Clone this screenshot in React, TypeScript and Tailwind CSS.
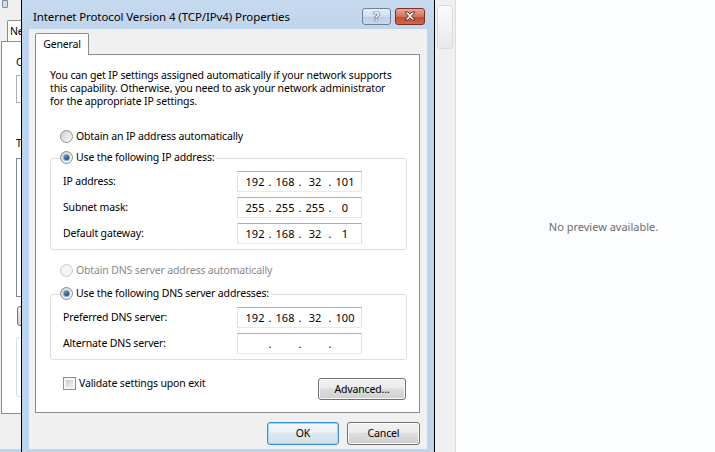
import { Fragment, type ReactNode } from 'react'
import clsx from 'clsx'

const Radio = ({ checked, disabled }: { checked?: boolean; disabled?: boolean }) => (
  <span
    className={clsx(
      'flex h-[13px] w-[13px] shrink-0 items-center justify-center rounded-full border',
      disabled
        ? 'border-[#c9c9c9] bg-[#f4f4f4]'
        : 'border-[#8e8f8f] bg-[linear-gradient(135deg,#cfcfcf,#fbfbfb)]',
    )}
  >
    {checked && (
      <span className="flex h-[7px] w-[7px] items-center justify-center rounded-full bg-[#7fb4de]">
        <span className="h-[5px] w-[5px] rounded-full bg-[radial-gradient(circle_at_35%_35%,#5b8fc0,#0f2c52)]" />
      </span>
    )}
  </span>
)

const Checkbox = () => (
  <span className="block h-[13px] w-[13px] shrink-0 border border-[#8e8f8f] bg-[#f4f4f4] p-[2px]">
    <span className="block h-full w-full bg-[linear-gradient(135deg,#c9c9c9,#f3f3f3)]" />
  </span>
)

const Button = ({ children, primary, className }: { children: ReactNode; primary?: boolean; className?: string }) => (
  <div
    className={clsx(
      'flex items-center justify-center rounded-[3px] border',
      primary
        ? 'border-[#3c8fcc] bg-[linear-gradient(#f4f8fb,#e9f0f6_45%,#dce7f0_50%,#d2e0eb)] shadow-[inset_0_0_0_1px_#9fd8f7]'
        : 'border-[#707070] bg-[linear-gradient(#f2f2f2,#ebebeb_45%,#dddddd_50%,#cfcfcf)] shadow-[inset_0_0_0_1px_#fafafa]',
      className,
    )}
  >
    {children}
  </div>
)

const IpField = ({ parts = ['', '', '', ''] }: { parts?: string[] }) => (
  <div className="flex h-[21px] w-[125px] items-center border border-[#abadb3] border-b-[#e3e9ef] border-l-[#e2e3ea] border-r-[#dbdfe6] bg-white pl-[5px] text-[11px] tracking-normal">
    {parts.map((p, i) => (
      <Fragment key={i}>
        {i > 0 && <span className="w-[6px] text-center">.</span>}
        <span className="w-[24px] text-center">{p}</span>
      </Fragment>
    ))}
  </div>
)

const Row = ({ label, parts }: { label: string; parts?: string[] }) => (
  <div className="flex items-center">
    <span className="w-[174px]">{label}</span>
    <IpField parts={parts} />
  </div>
)

const Group = ({ label, children }: { label: string; children: ReactNode }) => (
  <div className="relative rounded-[3px] border border-[#d5dfe5] pb-[5px] pl-[12px] pt-[12px]">
    <div className="absolute -top-[8px] left-[9px] flex h-[13px] items-center gap-[3px] bg-white pr-[2px]">
      <Radio checked />
      <span>{label}</span>
    </div>
    <div className="flex flex-col gap-[5px]">{children}</div>
  </div>
)

export default function App() {
  return (
    <div className="relative flex h-[452px] w-[715px] overflow-hidden bg-[#f0f0f0] font-['Noto_Sans',sans-serif] text-[10.5px] leading-[13px] tracking-[-0.15px] text-black">
      <div className="relative h-full w-[455px] shrink-0">
        {/* window behind, mostly covered */}
        <div className="absolute left-0 top-0 flex h-full w-[80px] flex-col bg-[#f0f0f0]">
          <div className="flex h-[20px] items-start pl-[2px]">
            <span className="block h-[8px] w-[6px] rounded-b-[1px] border border-[#7d8da0] bg-[#cfdcec]" />
          </div>
          <div className="ml-[7px] flex h-[21px] w-[40px] items-center rounded-t-[2px] border border-b-0 border-[#898c95] bg-white pl-[2px]">
            Ne
          </div>
          <div className="ml-[1px] flex h-[373px] flex-col border border-[#898c95] bg-white pl-[14px] pt-[14px]">
            <span>C</span>
            <div className="mt-[6px] h-[28px] border border-[#abadb3]" />
            <span className="mt-[34px]">T</span>
            <div className="mt-[8px] h-[139px] border border-[#828790]" />
            <div className="ml-[1px] mt-[9px] h-[20px] rounded-[3px] border border-[#707070] bg-[linear-gradient(#f2f2f2,#cfcfcf)]" />
            <div className="mt-[11px] h-[60px] rounded-[3px] border border-[#d5dfe5]" />
          </div>
          <div className="mt-auto h-[3px] bg-[#bcd4ec]" />
        </div>

        {/* another window edge on the right */}
        <div className="absolute left-[437px] top-[5px] h-[44px] w-[16px] rounded-[3px] border border-[#d9d9d9] bg-[linear-gradient(#fbfbfb,#e9e9e9)]" />

        {/* dialog */}
        <div className="absolute left-[21px] top-0 flex h-[470px] w-[414px] flex-col border-x border-black bg-[linear-gradient(#c6daef,#bcd4ec_40px)]">
          <div className="flex h-[29px] items-center pl-[11px] pr-[9px] pt-[3px]">
            <span className="flex-1 text-[11.5px] tracking-[-0.1px]">Internet Protocol Version 4 (TCP/IPv4) Properties</span>
            <div className="flex gap-[4px]">
              <div className="flex h-[17px] w-[29px] items-center justify-center rounded-[3px] border border-[#6f7f95] bg-[linear-gradient(#e4eef9,#cfdff0_50%,#b8cde6_51%,#c7d9ee)] text-[13px] font-bold leading-none text-white [text-shadow:0_0_1px_#223450,0_0_1px_#223450,0_0_1px_#223450]">
                ?
              </div>
              <div className="flex h-[17px] w-[30px] items-center justify-center rounded-[3px] border border-[#7a2f24] bg-[linear-gradient(#e8a899,#d8705c_50%,#c44a33_51%,#d0664e)]">
                <svg width="12" height="10" viewBox="0 0 12 10">
                  <path
                    d="M1 1h3l2 2.2L8 1h3L7.6 5 11 9H8L6 6.8 4 9H1l3.4-4z"
                    fill="#fff"
                    stroke="#3b1a14"
                    strokeWidth="0.8"
                    strokeLinejoin="round"
                  />
                </svg>
              </div>
            </div>
          </div>

          <div className="mx-[7px] flex h-[420px] flex-col bg-[#f0f0f0] pl-[6px] pr-[7px] pt-[4px]">
            <div className="relative z-10 -mb-px flex h-[22px] w-[54px] items-center justify-center rounded-t-[2px] border border-b-0 border-[#898c95] bg-white">
              General
            </div>
            <div className="flex h-[359px] flex-col border border-[#898c95] bg-white pl-[14px] pr-[12px] pt-[14px]">
              <div className="flex flex-col">
                <span>You can get IP settings assigned automatically if your network supports</span>
                <span>this capability. Otherwise, you need to ask your network administrator</span>
                <span>for the appropriate IP settings.</span>
              </div>

              <div className="ml-[10px] mt-[22px] flex h-[13px] items-center gap-[3px]">
                <Radio />
                <span>Obtain an IP address automatically</span>
              </div>

              <div className="mt-[15px]">
                <Group label="Use the following IP address:">
                  <Row label="IP address:" parts={['192', '168', '32', '101']} />
                  <Row label="Subnet mask:" parts={['255', '255', '255', '0']} />
                  <Row label="Default gateway:" parts={['192', '168', '32', '1']} />
                </Group>
              </div>

              <div className="ml-[10px] mt-[14px] flex h-[13px] items-center gap-[3px] text-[#8a8a8a]">
                <Radio disabled />
                <span>Obtain DNS server address automatically</span>
              </div>

              <div className="mt-[17px]">
                <Group label="Use the following DNS server addresses:">
                  <Row label="Preferred DNS server:" parts={['192', '168', '32', '100']} />
                  <Row label="Alternate DNS server:" />
                </Group>
              </div>

              <div className="mt-[17px] flex items-start justify-between">
                <div className="ml-[13px] flex h-[13px] items-center gap-[3px]">
                  <Checkbox />
                  <span>Validate settings upon exit</span>
                </div>
                <Button className="mr-px mt-px h-[22px] w-[88px]">Advanced...</Button>
              </div>
            </div>

            <div className="mt-[9px] flex justify-end gap-[8px]">
              <Button primary className="h-[23px] w-[72px]">
                OK
              </Button>
              <Button className="h-[23px] w-[73px]">Cancel</Button>
            </div>
          </div>
        </div>
      </div>

      <div className="flex h-full flex-1 items-center justify-center border-l border-[#cfdff0] bg-[#fcfdfe] pl-[36px] text-[11px] tracking-normal text-[#6d6d6d]">
        No preview available.
      </div>
    </div>
  )
}
